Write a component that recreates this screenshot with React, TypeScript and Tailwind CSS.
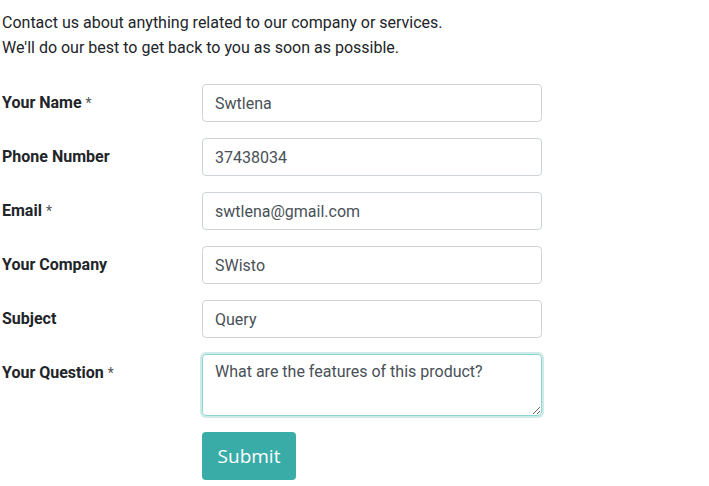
import React from "react";

const rows = [
  { label: "Your Name", req: true, value: "Swtlena" },
  { label: "Phone Number", req: false, value: "37438034" },
  { label: "Email", req: true, value: "swtlena@gmail.com" },
  { label: "Your Company", req: false, value: "SWisto" },
  { label: "Subject", req: false, value: "Query" },
];

export default function App() {
  return (
    <div className="min-h-screen bg-white pl-[2px] pt-[10px] text-[#212529]" style={{ fontFamily: "Roboto, 'Liberation Sans', sans-serif" }}>
      <p className="text-[16px] leading-[25px]">
        Contact us about anything related to our company or services.
        <br />
        We'll do our best to get back to you as soon as possible.
      </p>
      <form className="mt-[24px] flex flex-col gap-[16px]">
        {rows.map((r) => (
          <div key={r.label} className="flex">
            <label className="w-[200px] pt-[7px] text-[16px] font-bold leading-[24px]">
              {r.label}
              {r.req && <span className="ml-[4px] text-[14px] font-normal text-[#555]">*</span>}
            </label>
            <input
              readOnly
              value={r.value}
              className="h-[38px] w-[340px] rounded-[4px] border border-[#ced4da] px-3 text-[16px] text-[#495057] outline-none"
            />
          </div>
        ))}
        <div className="flex">
          <label className="w-[200px] pt-[7px] text-[16px] font-bold leading-[24px]">
            Your Question<span className="ml-[4px] text-[14px] font-normal text-[#555]">*</span>
          </label>
          <textarea
            readOnly
            value="What are the features of this product?"
            className="h-[62px] w-[340px] rounded-[4px] border border-[#8fd5d2] px-3 py-[5px] text-[16px] leading-[24px] text-[#495057] shadow-[0_0_0_2px_rgba(58,172,168,0.25)] outline-none"
          />
        </div>
        <div className="flex">
          <div className="w-[200px]" />
          <button
            type="button"
            className="h-[48px] w-[94px] rounded-[4px] bg-[#3aaca8] text-[19px] text-white"
            style={{ fontFamily: "'Open Sans', sans-serif" }}
          >
            Submit
          </button>
        </div>
      </form>
    </div>
  );
}
